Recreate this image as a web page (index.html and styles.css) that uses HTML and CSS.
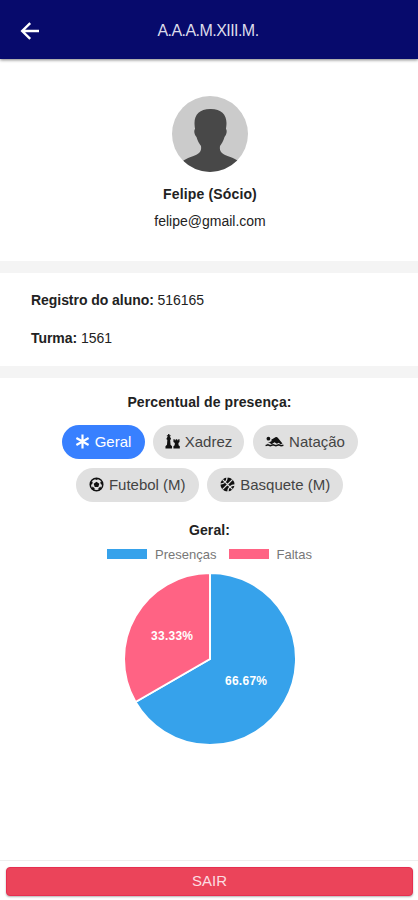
FILE: index.html
```html
<!DOCTYPE html>
<html lang="pt-BR">
<head>
    <meta charset="UTF-8">
    <meta name="viewport" content="width=device-width, initial-scale=1.0">
    <title>A.A.A.M.XIII.M.</title>
    <link rel="stylesheet" href="styles.css">
</head>
<body>
    <header class="toolbar">
        <svg class="back" viewBox="0 0 20 20"><path d="M10.2 2.2L2.2 10l8 7.8M2.6 10H19"/></svg>
        <h1 class="title">A.A.A.M.XIII.M.</h1>
    </header>

    <main class="content">
        <section class="profile">
            <svg class="avatar" viewBox="0 0 76 76">
                <defs><clipPath id="round"><circle cx="38" cy="38" r="38"/></clipPath></defs>
                <g clip-path="url(#round)">
                    <rect width="76" height="76" fill="#cbcbcb"/>
                    <path fill="#484848" d="M38 13c-10 0-15.500 5.500-15.500 14 0 2 .3 4.500.6 6-1.500 1-.8 6 1.400 8 1 4 3 7 4.500 9 1 6-2.500 8-7.500 10-4 1.500-7 2.500-10 4.500V76h54V64.500c-3-2-6-3-10-4.500-5-2-8.500-4-7.500-10 1.500-2 3.500-5 4.500-9 2.200-2 2.900-7 1.400-8 .3-1.500.6-4 .6-6 0-8.500-5.500-14-15.500-14z"/>
                </g>
            </svg>
            <div class="name">Felipe (Sócio)</div>
            <div class="email">felipe@gmail.com</div>
        </section>

        <section class="info">
            <p><b>Registro do aluno:</b> 516165</p>
            <p><b>Turma:</b> 1561</p>
        </section>

        <section class="presence">
            <h2 class="heading">Percentual de presença:</h2>
            <div class="chips">
                <button class="chip geral active">
                    <svg class="icon" viewBox="0 0 16 16"><path d="M8 .5v15M1.500 4.250l13 7.500M14.500 4.250l-13 7.500" fill="none" stroke="currentColor" stroke-width="2.300"/></svg>
                    <span>Geral</span>
                </button>
                <button class="chip xadrez">
                    <svg class="icon" viewBox="0 0 16 16"><path d="M3.300 0h1.400v1.300H6v1.200H5L6.500 5 6 6h-.5l.4 5.500L7.500 13v2.500h-7V13l1.600-1.500L2.500 6H2l-.5-1L3 2.500H2V1.300h1.300zM9 5.500h1.400v1.200h1V5.500h1.700v1.200h1V5.500h1.400v3l-1.200 1 .2 2.500 1.300 1v2.500H9V13l1.300-1 .2-2.500L9 8.500z"/></svg>
                    <span>Xadrez</span>
                </button>
                <button class="chip natacao">
                    <svg class="icon icon-wide" viewBox="0 0 20 16"><circle cx="3.500" cy="5" r="2"/><path d="M2 10l5-2.500L6.500 6l4.500-2.500c1-.5 1.800-.3 2.500.5l5 6-2 .8-2-1.500-2 1.200-2.500-1.700-3 2-2.500-1.500z"/><path d="M.5 12.500l2.500-1 2.500 1 3-1 3 1 3-1 2.500 1 2.500-.5" fill="none" stroke="currentColor" stroke-width="1.500"/></svg>
                    <span>Natação</span>
                </button>
                <button class="chip futebol">
                    <svg class="icon" viewBox="0 0 16 16"><circle cx="8" cy="8" r="6.700" fill="none" stroke="currentColor" stroke-width="1.600"/><path d="M8 5l3 2.200-1.100 3.500H6.100L5 7.200zM5.500 1.600L8 3.300l2.500-1.700zM1.300 9l.3-3.500L4 5 3.500 7.500zM14.700 9l-.3-3.500L12 5l.5 2.500zM3 12.500l.7-2.300L6 12l-.2 2.700zM13 12.500l-.7-2.300L10 12l.2 2.700z"/></svg>
                    <span>Futebol (M)</span>
                </button>
                <button class="chip basquete">
                    <svg class="icon" viewBox="0 0 16 16"><circle cx="8" cy="8" r="7.500"/><path d="M2.500 2.500l11 11M13.500 2.500l-11 11M7.500 0c.3 4.500-3 7.500-7.500 7.500M8.500 16c-.3-4.500 3-7.500 7.500-7.500" fill="none" stroke="#e0e0e0" stroke-width="1.400"/></svg>
                    <span>Basquete (M)</span>
                </button>
            </div>

            <h2 class="heading chart-title">Geral:</h2>
            <div class="legend">
                <i class="swatch blue"></i><span>Presenças</span>
                <i class="swatch pink"></i><span>Faltas</span>
            </div>
            <svg class="pie" viewBox="-86 -86 172 172">
                <path class="slice" fill="#36a2eb" d="M0 0V-86A86 86 0 1 1 -74.480 43Z"/>
                <path class="slice" fill="#ff6384" d="M0 0L-74.480 43A86 86 0 0 1 0 -86Z"/>
                <text x="-38" y="-19" textLength="42">33.33%</text>
                <text x="36" y="25.500" textLength="42">66.67%</text>
            </svg>
        </section>
    </main>

    <footer class="footer">
        <button class="logout">SAIR</button>
    </footer>
</body>
</html>
```

FILE: styles.css
```css
* {
    box-sizing: border-box;
}
body {
    display: flex;
    flex-direction: column;
    height: 900px;
    margin: 0;
    overflow: hidden;
    background-color: #fff;
    color: #222;
    font-family: "Liberation Sans", Arial, sans-serif;
    font-size: 14px;
}
h1, h2, p {
    margin: 0;
}
button {
    border: none;
    font-family: inherit;
}
.toolbar {
    display: grid;
    grid-template-columns: 60px 1fr 60px;
    align-items: center;
    height: 59px;
    padding-top: 2px;
    background-color: #070a6c;
    box-shadow: 0 1px 3px rgba(0, 0, 0, 0.5);
}
.back {
    width: 20px;
    height: 20px;
    margin-left: 20px;
    fill: none;
    stroke: #fff;
    stroke-width: 2.4;
}
.title {
    padding-right: 2px;
    color: #dcdcea;
    font-size: 16px;
    font-weight: normal;
    letter-spacing: -0.55px;
    text-align: center;
}
.content {
    flex: 1;
}
.profile {
    display: flex;
    flex-direction: column;
    align-items: center;
    height: 214px;
    padding-top: 37px;
    padding-left: 2px;
    border-bottom: 12px solid #f4f4f4;
}
.avatar {
    width: 76px;
    height: 76px;
}
.name {
    margin-top: 14px;
    font-weight: bold;
    line-height: 16px;
    letter-spacing: 0.15px;
}
.email {
    margin-top: 11px;
    line-height: 16px;
}
.info {
    height: 105px;
    padding: 19px 31px 0;
    border-bottom: 12px solid #f4f4f4;
}
.info p {
    height: 38px;
    line-height: 16px;
    letter-spacing: -0.05px;
}
.presence {
    display: flex;
    flex-direction: column;
    align-items: center;
    padding-top: 16px;
    padding-left: 1px;
}
.heading {
    font-size: 14px;
    line-height: 16px;
    letter-spacing: 0.1px;
}
.chips {
    display: flex;
    flex-wrap: wrap;
    justify-content: center;
    gap: 9px 8.5px;
    width: 330px;
    margin-top: 15px;
}
.chip {
    display: flex;
    align-items: center;
    justify-content: center;
    gap: 5px;
    height: 34px;
    padding: 0 0 1px;
    border-radius: 17px;
    background-color: #e0e0e0;
    color: #444;
    font-size: 15px;
    white-space: nowrap;
}
.chip.active {
    background-color: #3880ff;
    color: #fff;
}
.geral { width: 83px; }
.xadrez { width: 91px; }
.natacao { width: 105px; }
.futebol { width: 123px; }
.basquete { width: 136px; }
.icon {
    width: 15px;
    height: 15px;
    color: #111;
    fill: currentColor;
}
.active .icon {
    color: #fff;
}
.icon-wide {
    width: 19px;
}
.chart-title {
    margin-top: 20px;
}
.legend {
    display: flex;
    align-items: center;
    height: 16px;
    margin-top: 8px;
    color: #777;
    font-size: 13px;
}
.swatch {
    width: 40px;
    height: 10px;
    margin-right: 8px;
}
.blue {
    background-color: #36a2eb;
}
.pink {
    margin-left: 12px;
    background-color: #ff6384;
}
.pie {
    width: 172px;
    height: 172px;
    margin-top: 11px;
    margin-left: 1px;
}
.slice {
    stroke: #fff;
    stroke-width: 2;
}
.pie text {
    fill: #fff;
    font-size: 12px;
    font-weight: bold;
    text-anchor: middle;
}
.footer {
    height: 40px;
    padding: 6px 5px 0 6px;
    border-top: 1px solid #eee;
}
.logout {
    width: 100%;
    height: 29px;
    padding: 0 0 2px;
    border: 1px solid #e62e50;
    border-radius: 4px;
    background-color: #eb445a;
    box-shadow: 0 1px 2px rgba(0, 0, 0, 0.3);
    color: #fbdde1;
    font-size: 15px;
}
```
